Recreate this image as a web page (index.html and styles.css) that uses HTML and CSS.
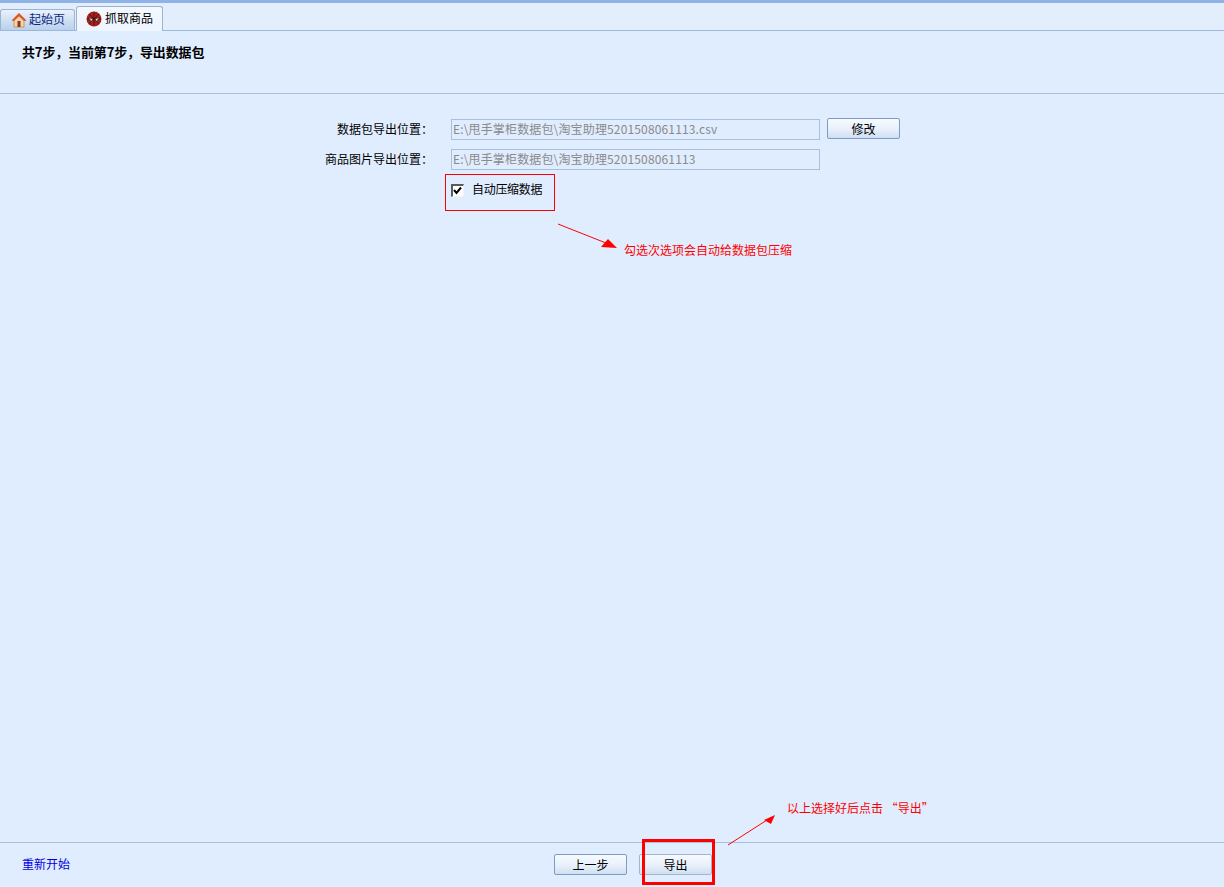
FILE: index.html
```html
<!DOCTYPE html>
<html lang="zh-CN">
<head>
<meta charset="utf-8">
<title>抓取商品</title>
<link rel="stylesheet" href="styles.css">
</head>
<body>
<div class="app">
  <div class="tabbar">
    <div class="tab tab-idle">
      <svg class="tab-icon" viewBox="0 0 16 16" width="16" height="16">
        <path d="M3 8 L8 3 L13 8 L13 15 L3 15 Z" fill="#f2d3ae" stroke="#c9803f" stroke-width=".7"/>
        <path d="M8 1 L15.5 8.5 L13 9 L8 4.2 L3 9 L.5 8.5 Z" fill="#d9541e"/>
        <rect x="6.5" y="9" width="3" height="6" fill="#8a3a16"/>
      </svg>
      <span class="tab-text">起始页</span>
    </div>
    <div class="tab tab-active">
      <svg class="tab-icon" viewBox="0 0 16 16" width="16" height="16">
        <circle cx="8" cy="8" r="7.5" fill="#a8201c"/>
        <path d="M1 8 H15 M8 1 V15 M3 3 L13 13 M13 3 L3 13" stroke="#4a1010" stroke-width=".8"/>
        <path d="M2.5 6.5 L7 8 L5.5 10.5 Z M13.5 6.5 L9 8 L10.5 10.5 Z" fill="#e8e8e8" stroke="#222" stroke-width=".6"/>
      </svg>
      <span class="tab-text">抓取商品</span>
    </div>
  </div>
  <div class="step-head">共7步，当前第7步，导出数据包</div>
  <main class="form-area">
    <div class="form-row">
      <label class="form-label">数据包导出位置：</label>
      <input class="path-input" type="text" disabled value="E:\甩手掌柜数据包\淘宝助理5201508061113.csv">
      <button class="btn btn-edit" type="button">修改</button>
    </div>
    <div class="form-row">
      <label class="form-label">商品图片导出位置：</label>
      <input class="path-input" type="text" disabled value="E:\甩手掌柜数据包\淘宝助理5201508061113">
    </div>
    <div class="check-row">
      <span class="checkbox">
        <svg viewBox="0 0 13 13" width="13" height="13"><path d="M3 6 L5.5 9 L10 3.5" fill="none" stroke="#000" stroke-width="2"/></svg>
      </span>
      <span class="check-text">自动压缩数据</span>
    </div>
  </main>
  <footer class="footer">
    <a class="restart" href="#">重新开始</a>
    <div class="footer-actions">
      <button class="btn" type="button">上一步</button>
      <button class="btn btn-muted" type="button">导出</button>
    </div>
  </footer>

  <div class="mark mark-check"></div>
  <div class="mark mark-export"></div>
  <svg class="arrows" viewBox="0 0 1224 887" width="1224" height="887">
    <path d="M558 224 L606 243" stroke="#f00" stroke-width="1" fill="none"/>
    <path d="M617 248 L601 247 L608 239 Z" fill="#f00"/>
    <path d="M728 845 L767 820" stroke="#f00" stroke-width="1" fill="none"/>
    <path d="M775 815 L764 820 L771 824 Z" fill="#f00"/>
  </svg>
  <div class="note note-check">勾选次选项会自动给数据包压缩</div>
  <div class="note note-export">以上选择好后点击 “导出”</div>
</div>
</body>
</html>
```
FILE: styles.css
```css
* { box-sizing: border-box; }
html, body { margin: 0; padding: 0; }
body {
  font-family: "Noto Sans CJK SC", "Liberation Sans", sans-serif;
  font-size: 12px;
  color: #000;
  background: #e0edfe;
}
.app {
  position: relative;
  width: 1224px;
  height: 887px;
  display: flex;
  flex-direction: column;
  overflow: hidden;
  background: #e0edfe;
}
.tabbar {
  height: 31px;
  flex: none;
  display: flex;
  align-items: flex-end;
  gap: 1px;
  padding-left: 0;
  border-top: 3px solid #8fb3e6;
  border-bottom: 1px solid #9cb8dc;
  background: #e3eefd;
}
.tab {
  display: flex;
  align-items: center;
  margin-bottom: -1px;
  border: 1px solid #9cb3d4;
  border-bottom: none;
  border-radius: 3px 3px 0 0;
  line-height: 16px;
}
.tab-icon { flex: none; margin-right: 2px; }
.tab-text { margin-top: -2px; }
.tab-idle {
  width: 75px;
  height: 22px;
  padding-left: 10px;
  color: #0a2a80;
  background: linear-gradient(#eaf2fc, #d3e2f5 45%, #b9d0ec);
  border-bottom: 1px solid #9cb8dc;
}
.tab-active {
  width: 87px;
  height: 25px;
  padding-left: 9px;
  background: linear-gradient(#f4f8fe, #eef5ff);
  position: relative;
}
.tab-active .tab-icon { margin-right: 3px; }
.step-head {
  height: 63px;
  flex: none;
  padding: 12px 0 0 22px;
  font-size: 13px;
  font-weight: 700;
  letter-spacing: -.14px;
  line-height: 18px;
  border-bottom: 1px solid #a9c0dc;
}
.form-area {
  flex: 1;
  padding-top: 25px;
}
.form-row {
  height: 21px;
  margin-bottom: 9px;
  display: flex;
  align-items: flex-start;
  padding-left: 280px;
}
.form-label {
  width: 153px;
  text-align: right;
  line-height: 19px;
  margin-right: 18px;
}
.path-input {
  width: 369px;
  height: 21px;
  padding: 0 1px 2px;
  border: 1px solid #a9bfdb;
  background: transparent;
  color: #8a8a8a;
  font: inherit;
  letter-spacing: .15px;
  line-height: 17px;
}
.btn {
  width: 73px;
  height: 21px;
  padding: 0;
  border: 1px solid #7d9cc4;
  border-radius: 2px;
  background: linear-gradient(#f7faff, #e8f0fb 55%, #cfdff2);
  color: #000;
  font: inherit;
  line-height: 19px;
}
.btn-edit { margin: -1px 0 0 7px; }
.btn-muted { border-color: #a5b6cc; }
.check-row {
  display: flex;
  align-items: center;
  height: 20px;
  margin: 10px 0 0 451px;
  gap: 8px;
}
.check-text { margin-top: -3px; letter-spacing: -.3px; }
.checkbox {
  width: 13px;
  height: 13px;
  display: block;
  background: #fff;
  border-style: solid;
  border-width: 2px 1px 1px 2px;
  border-color: #5a5a5a #f2f2f2 #f2f2f2 #5a5a5a;
  line-height: 0;
}
.checkbox svg { display: block; margin: -2px 0 0 -2px; }
.footer {
  height: 45px;
  flex: none;
  border-top: 1px solid #a9c0dc;
  position: relative;
  display: flex;
  align-items: flex-start;
  padding: 11px 0 0 22px;
}
.restart {
  color: #0000e0;
  text-decoration: none;
  line-height: 20px;
}
.footer-actions {
  display: flex;
  gap: 12px;
  margin-left: 484px;
}
.mark {
  position: absolute;
  border-style: solid;
  border-color: #f00;
}
.mark-check {
  left: 445px;
  top: 174px;
  width: 110px;
  height: 37px;
  border-width: 1px;
}
.mark-export {
  left: 642px;
  top: 839px;
  width: 73px;
  height: 46px;
  border-width: 3px;
}
.arrows {
  position: absolute;
  left: 0;
  top: 0;
  pointer-events: none;
}
.note {
  position: absolute;
  color: #f00;
  line-height: 16px;
  white-space: nowrap;
}
.note-check { left: 624px; top: 242px; }
.note-export { left: 787px; top: 800px; }
```
